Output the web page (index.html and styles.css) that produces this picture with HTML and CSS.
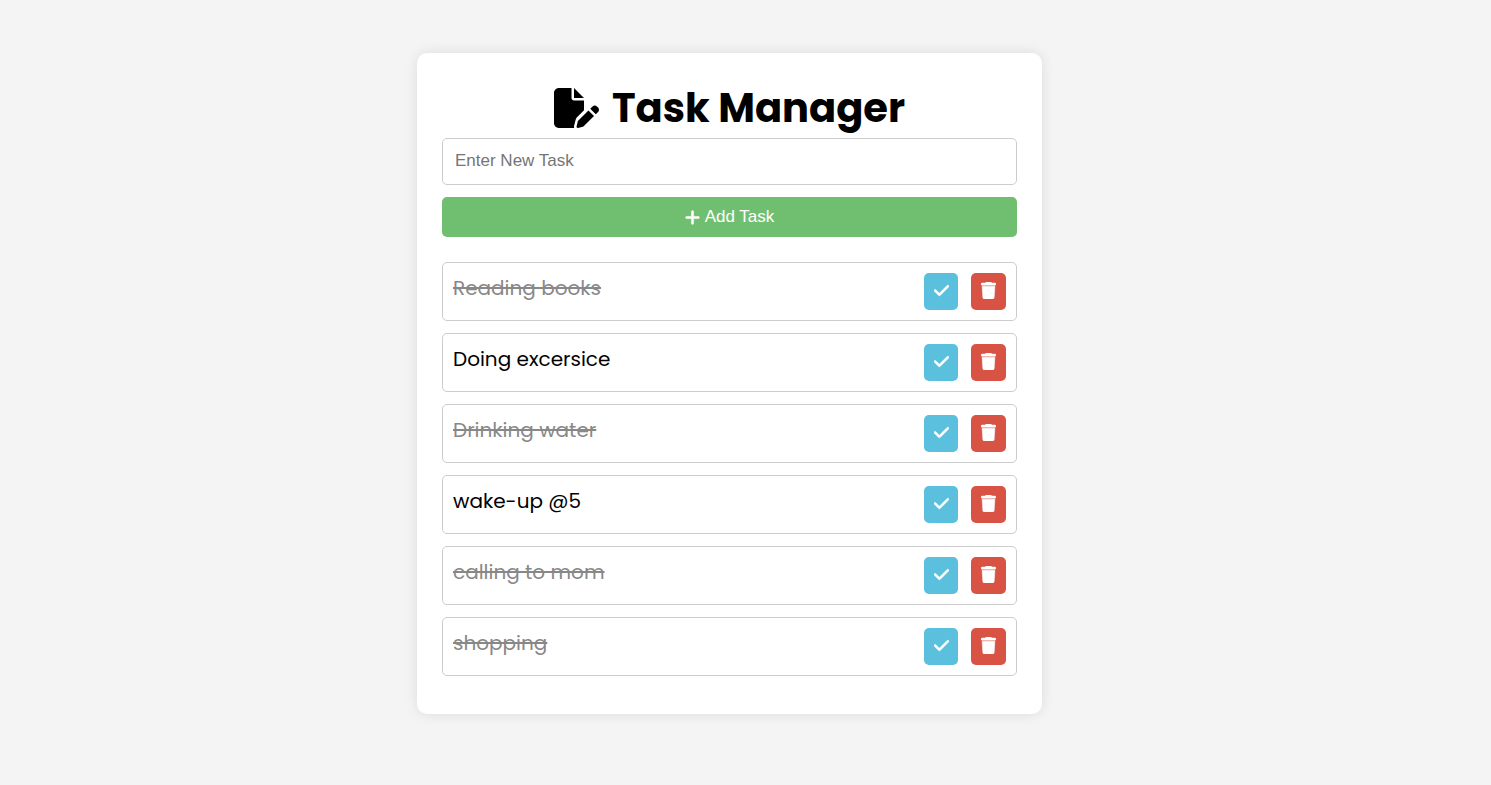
FILE: index.html
```html
<!DOCTYPE html>
<html lang="en">
<head>
<meta charset="utf-8">
<meta name="viewport" content="width=device-width, initial-scale=1">
<title>Task Manager</title>
<link rel="stylesheet" href="styles.css">
</head>
<body>
<svg class="sprite" aria-hidden="true">
  <symbol id="file-pen" viewBox="0 0 576 512"><path d="M0 64C0 28.700 28.700 0 64 0H224V128c0 17.700 14.300 32 32 32H384V285.700l-86.800 86.800c-10.300 10.300-17.500 23.100-21 37.200l-18.700 74.900c-2.300 9.200-1.800 18.800 1.300 27.500H64c-35.300 0-64-28.700-64-64V64zm384 64H256V0L384 128zM549.800 235.700l14.400 14.400c15.600 15.600 15.600 40.900 0 56.600l-29.400 29.400-71-71 29.400-29.400c15.600-15.600 40.900-15.600 56.600 0zM311.900 417L441.100 287.800l71 71L382.900 487.900c-4.100 4.100-9.200 7-14.900 8.400l-60.100 15c-5.500 1.400-11.200-.2-15.200-4.200s-5.600-9.700-4.200-15.200l15-60.100c1.400-5.600 4.300-10.800 8.400-14.900z"/></symbol>
  <symbol id="plus" viewBox="0 0 448 512"><path d="M256 80c0-17.700-14.300-32-32-32s-32 14.300-32 32V224H48c-17.700 0-32 14.300-32 32s14.300 32 32 32H192V432c0 17.700 14.300 32 32 32s32-14.300 32-32V288H400c17.700 0 32-14.300 32-32s-14.300-32-32-32H256V80z"/></symbol>
  <symbol id="check" viewBox="0 0 448 512"><path d="M438.600 105.400c12.500 12.500 12.500 32.800 0 45.300l-256 256c-12.500 12.500-32.800 12.500-45.300 0l-128-128c-12.500-12.500-12.500-32.800 0-45.300s32.800-12.500 45.300 0L160 338.700 393.400 105.400c12.500-12.500 32.800-12.500 45.300 0z"/></symbol>
  <symbol id="trash" viewBox="0 0 448 512"><path d="M135.200 17.700L128 32H32C14.300 32 0 46.300 0 64S14.300 96 32 96H416c17.700 0 32-14.300 32-32s-14.300-32-32-32H320l-7.200-14.300C307.400 6.800 296.300 0 284.200 0H163.800c-12.100 0-23.200 6.800-28.600 17.700zM416 128H32L53.200 467c1.600 25.300 22.600 45 47.900 45H346.900c25.300 0 46.300-19.700 47.900-45L416 128z"/></symbol>
</svg>
<main class="card">
  <h1 class="title"><svg class="title-icon" aria-hidden="true"><use href="#file-pen"/></svg>Task Manager</h1>
  <form class="task-form">
    <input class="task-input" type="text" placeholder="Enter New Task" aria-label="Enter New Task">
    <button class="add-button" type="button"><svg class="icon" aria-hidden="true"><use href="#plus"/></svg>Add Task</button>
  </form>
  <ul class="tasks">
    <li class="task done"><span class="task-name">Reading books</span><button class="action complete" type="button" aria-label="Complete"><svg class="icon" aria-hidden="true"><use href="#check"/></svg></button><button class="action delete" type="button" aria-label="Delete"><svg class="icon" aria-hidden="true"><use href="#trash"/></svg></button></li>
    <li class="task"><span class="task-name">Doing excersice</span><button class="action complete" type="button" aria-label="Complete"><svg class="icon" aria-hidden="true"><use href="#check"/></svg></button><button class="action delete" type="button" aria-label="Delete"><svg class="icon" aria-hidden="true"><use href="#trash"/></svg></button></li>
    <li class="task done"><span class="task-name">Drinking water</span><button class="action complete" type="button" aria-label="Complete"><svg class="icon" aria-hidden="true"><use href="#check"/></svg></button><button class="action delete" type="button" aria-label="Delete"><svg class="icon" aria-hidden="true"><use href="#trash"/></svg></button></li>
    <li class="task"><span class="task-name">wake-up @5</span><button class="action complete" type="button" aria-label="Complete"><svg class="icon" aria-hidden="true"><use href="#check"/></svg></button><button class="action delete" type="button" aria-label="Delete"><svg class="icon" aria-hidden="true"><use href="#trash"/></svg></button></li>
    <li class="task done"><span class="task-name">calling to mom</span><button class="action complete" type="button" aria-label="Complete"><svg class="icon" aria-hidden="true"><use href="#check"/></svg></button><button class="action delete" type="button" aria-label="Delete"><svg class="icon" aria-hidden="true"><use href="#trash"/></svg></button></li>
    <li class="task done"><span class="task-name">shopping</span><button class="action complete" type="button" aria-label="Complete"><svg class="icon" aria-hidden="true"><use href="#check"/></svg></button><button class="action delete" type="button" aria-label="Delete"><svg class="icon" aria-hidden="true"><use href="#trash"/></svg></button></li>
  </ul>
</main>
</body>
</html>
```
FILE: styles.css
```css
* {
  box-sizing: border-box;
  margin: 0;
  padding: 0;
}

body {
  padding: 53px 32px 53px 0;
  background: #f4f4f4;
  color: #000;
  font-family: Poppins, Inter, sans-serif;
}

.sprite {
  display: none;
}

.card {
  max-width: 625px;
  margin: 0 auto;
  padding: 25px 25px 38px;
  border-radius: 10px;
  background: #fff;
  box-shadow: 0 0 13px rgba(0, 0, 0, 0.1);
}

.title {
  display: flex;
  align-items: center;
  justify-content: center;
  gap: 13px;
  font-size: 40px;
  font-weight: 700;
  line-height: 60px;
}

.title-icon {
  width: 45px;
  height: 40px;
}

.title-icon,
.icon {
  flex: none;
  fill: currentColor;
}

.icon {
  width: 15px;
  height: 17px;
  stroke: currentColor;
  stroke-width: 16px;
  overflow: visible;
}

.task-form {
  display: flex;
  flex-direction: column;
  gap: 12px;
}

.task-input,
.add-button {
  width: 100%;
  border-radius: 5px;
  font-family: "Liberation Sans", Arial, sans-serif;
  font-size: 17px;
  line-height: 20px;
}

.task-input {
  padding: 12px 12px 13px;
  border: 1px solid #ccc;
  background: #fff;
}

.task-input::placeholder {
  color: #757575;
}

.add-button {
  display: flex;
  align-items: center;
  justify-content: center;
  gap: 5px;
  padding: 10px;
  border: 0;
  background: #70bf70;
  color: #fff;
}

.tasks {
  display: flex;
  flex-direction: column;
  gap: 12px;
  margin-top: 25px;
  list-style: none;
}

.task {
  display: flex;
  align-items: flex-start;
  gap: 13px;
  padding: 10px;
  border: 1px solid #ccc;
  border-radius: 5px;
}

.task-name {
  flex: 1;
  font-size: 20px;
  line-height: 30px;
}

.done .task-name {
  color: #888;
  text-decoration: line-through;
}

.action {
  display: flex;
  justify-content: center;
  padding: 9px 10px 11px;
  border: 0;
  border-radius: 5px;
  color: #fff;
}

.complete {
  width: 34px;
  background: #5bc0de;
}

.delete {
  background: #d85344;
}
```
